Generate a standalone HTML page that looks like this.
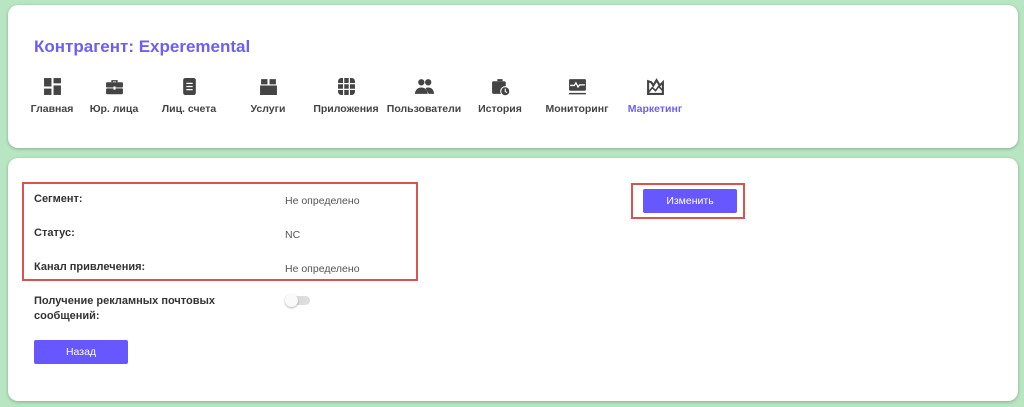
<!DOCTYPE html>
<html><head><meta charset="utf-8"><style>
*{margin:0;padding:0;box-sizing:border-box}
body{width:1024px;height:407px;background:#b8e5c2;font-family:"Liberation Sans",sans-serif;position:relative;overflow:hidden}
.card{position:absolute;left:8px;width:1010px;background:#fff;border-radius:10px;box-shadow:0 1px 3px rgba(0,0,0,.25)}
.t{position:absolute;white-space:nowrap}
.title{left:26px;top:32px;font-size:17px;font-weight:bold;color:#6b5ff5}
.nav{position:absolute;top:72px;width:80px;text-align:center;font-size:10.5px;font-weight:bold;color:#444}
.nav svg{display:block;margin:0 auto 7px;width:19px;height:19px}
.lab{font-size:11px;font-weight:bold;color:#333}
.val{font-size:10.5px;color:#555}
.btn{position:absolute;background:#6657ff;color:#fff;font-size:10.5px;text-align:center;border-radius:2px}
</style></head><body>
<div class="card" style="top:5px;height:143px">
<div class="t title">Контрагент: Experemental</div>
<div class="nav" style="left:4px"><svg viewBox="0 0 18 18" fill="#444"><rect x="1" y="1" width="7" height="8"/><rect x="10" y="1" width="7" height="5"/><rect x="1" y="11" width="7" height="6"/><rect x="10" y="8" width="7" height="9"/></svg>Главная</div>
<div class="nav" style="left:66px"><svg viewBox="0 0 18 18" fill="#444"><path d="M6 3h6v2h-1.5V4.3h-3V5H6z"/><rect x="1" y="5" width="16" height="5" rx="1"/><rect x="1" y="10.8" width="16" height="5.5" rx="1"/><rect x="8" y="9" width="2" height="3" fill="#fff"/></svg>Юр. лица</div>
<div class="nav" style="left:141px"><svg viewBox="0 0 18 18" fill="#444"><rect x="3" y="1" width="12" height="16" rx="2"/><path d="M6 6h6M6 9h6M6 12h6" stroke="#fff" stroke-width="1.2"/></svg>Лиц. счета</div>
<div class="nav" style="left:220px"><svg viewBox="0 0 18 18" fill="#444"><path d="M2 2h6v5H2zM10 2h6v5h-6zM1 8h16v9H1z"/></svg>Услуги</div>
<div class="nav" style="left:298px"><svg viewBox="0 0 18 18" fill="#444"><rect x="1" y="1" width="16" height="16" rx="3"/><path d="M6.3 1v16M11.7 1v16M1 6.3h16M1 11.7h16" stroke="#fff" stroke-width="1.2"/></svg>Приложения</div>
<div class="nav" style="left:376px"><svg viewBox="0 0 18 18" fill="#444"><circle cx="6" cy="5" r="3"/><circle cx="12.5" cy="5" r="3"/><path d="M0 16c0-4 3-6 6-6s6 2 6 6zM10 10.5c1-.5 2-.5 2.5-.5 3 0 5.5 2 5.5 6h-5z"/></svg>Пользователи</div>
<div class="nav" style="left:452px"><svg viewBox="0 0 18 18" fill="#444"><path d="M6 2h5v2H6z"/><rect x="1" y="4" width="13" height="12" rx="1.5"/><circle cx="13.5" cy="13.5" r="4.3" stroke="#fff" stroke-width="1"/><path d="M13.5 11v2.7l1.6 1" stroke="#fff" stroke-width="1" fill="none"/></svg>История</div>
<div class="nav" style="left:529px"><svg viewBox="0 0 18 18" fill="#444"><rect x="1" y="2" width="16" height="11" rx="1"/><path d="M1 15h16v1.5H1z"/><path d="M2 8h4l1.5-2.5 2 4 1.5-2h5" stroke="#fff" stroke-width="1.2" fill="none"/></svg>Мониторинг</div>
<div class="nav" style="left:607px;color:#6b5ff5"><svg viewBox="0 0 18 18" fill="none" stroke="#444" stroke-width="2"><path d="M2 4v12h14V5l-3 3-3-5-3 5-2-3z"/><path d="M2 15l4-5 3 3 3-4 4 4" stroke-width="1.5"/></svg>Маркетинг</div>
</div>
<div class="card" style="top:158px;height:243px"></div>
<div style="position:absolute;left:22px;top:182px;width:396px;height:99px;border:2px solid #d9534f"></div>
<div class="t lab" style="left:34px;top:193px">Сегмент:</div>
<div class="t val" style="left:285px;top:195px">Не определено</div>
<div class="t lab" style="left:34px;top:227px">Статус:</div>
<div class="t val" style="left:285px;top:229px">NC</div>
<div class="t lab" style="left:34px;top:261px">Канал привлечения:</div>
<div class="t val" style="left:285px;top:263px">Не определено</div>
<div class="t lab" style="left:34px;top:294px;line-height:15px">Получение рекламных почтовых<br>сообщений:</div>
<div style="position:absolute;left:286px;top:296px;width:24px;height:9px;border-radius:5px;background:#ddd"></div>
<div style="position:absolute;left:285px;top:294px;width:13px;height:13px;border-radius:50%;background:#fafafa;box-shadow:0 1px 2px rgba(0,0,0,.3)"></div>
<div class="btn" style="left:34px;top:340px;width:94px;height:24px;line-height:24px">Назад</div>
<div style="position:absolute;left:631px;top:183px;width:114px;height:36px;border:2px solid #d9534f"></div>
<div class="btn" style="left:643px;top:189px;width:94px;height:24px;line-height:24px">Изменить</div>
</body></html>
